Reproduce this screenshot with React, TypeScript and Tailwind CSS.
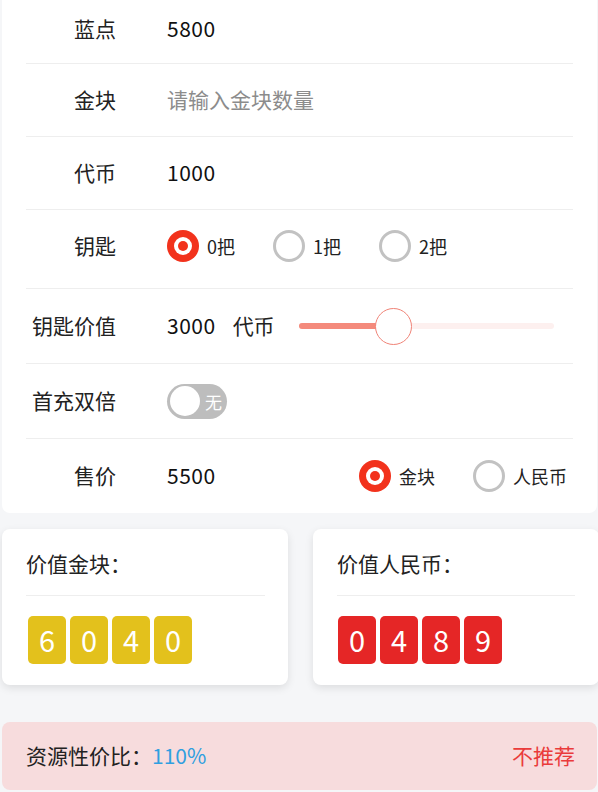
import React from "react";

const font = { fontFamily: '"Noto Sans CJK SC", "Noto Sans", sans-serif' };

function Radio({ checked, label }: { checked?: boolean; label: string }) {
  return (
    <div className="flex items-center gap-[8px]">
      {checked ? (
        <div className="w-[32px] h-[32px] rounded-full bg-[#f2321c] flex items-center justify-center">
          <div className="w-[18px] h-[18px] rounded-full bg-white flex items-center justify-center">
            <div className="w-[10px] h-[10px] rounded-full bg-[#f2321c]" />
          </div>
        </div>
      ) : (
        <div className="w-[32px] h-[32px] rounded-full border-[3px] border-[#c2c2c2] bg-white" />
      )}
      <span className="text-[18px] text-[#222]">{label}</span>
    </div>
  );
}

function Row({
  label,
  h,
  extra = "",
  last,
  children,
}: {
  label: string;
  h: string;
  extra?: string;
  last?: boolean;
  children: React.ReactNode;
}) {
  return (
    <div
      className={`flex items-center ${h} ${extra} ${last ? "" : "border-b border-[#eeeeee]"}`}
    >
      <div className="w-[90px] text-right text-[21px] text-[#222] shrink-0">{label}</div>
      <div className="ml-[51px] flex-1 flex items-center">{children}</div>
    </div>
  );
}

function Digits({ value, color }: { value: string; color: string }) {
  return (
    <div className="flex gap-[4px]">
      {value.split("").map((d, i) => (
        <div
          key={i}
          className={`w-[38px] h-[48px] rounded-[5px] ${color} flex items-center justify-center text-white text-[29px]`}
        >
          {d}
        </div>
      ))}
    </div>
  );
}

export default function App() {
  return (
    <div className="w-[598px] h-[792px] bg-[#f5f6f8] overflow-hidden pl-[2px] pr-[1px]" style={font}>
      <div className="bg-white rounded-b-[8px] px-[24px]">
        <Row label="蓝点" h="h-[64px]" extra="pb-[6px]">
          <span className="text-[21px] text-[#111] tracking-[0.5px]">5800</span>
        </Row>
        <Row label="金块" h="h-[73px]">
          <input
            className="w-full outline-none text-[21px] text-[#111] placeholder:text-[#8c8c8c] bg-transparent"
            placeholder="请输入金块数量"
          />
        </Row>
        <Row label="代币" h="h-[73px]">
          <span className="text-[21px] text-[#111] tracking-[0.5px]">1000</span>
        </Row>
        <Row label="钥匙" h="h-[79px]" extra="pb-[6px]">
          <div className="flex items-center gap-[38px]">
            <Radio checked label="0把" />
            <Radio label="1把" />
            <Radio label="2把" />
          </div>
        </Row>
        <Row label="钥匙价值" h="h-[75px]">
          <span className="text-[21px] text-[#111] tracking-[0.5px]">3000</span>
          <span className="text-[21px] text-[#222] ml-[17px]">代币</span>
          <div className="ml-[24px] w-[255px] h-[6px] rounded-full bg-[#fdf0ef] relative">
            <div className="absolute left-0 top-0 h-[6px] w-[95px] rounded-full bg-[#f48a7c]" />
            <div className="absolute left-[76px] top-[-15.5px] w-[37px] h-[37px] rounded-full bg-white border border-[#f08377]" />
          </div>
        </Row>
        <Row label="首充双倍" h="h-[75px]">
          <div className="w-[60px] h-[35px] rounded-full bg-[#bdbdbd] flex items-center pl-[3px] relative">
            <div className="w-[30px] h-[30px] rounded-full bg-white" />
            <span className="ml-[5px] text-[17px] text-white leading-none">无</span>
          </div>
        </Row>
        <Row label="售价" h="h-[74px]" last>
          <span className="text-[21px] text-[#111] tracking-[0.5px]">5500</span>
          <div className="ml-auto flex items-center gap-[38px] pr-[6px]">
            <Radio checked label="金块" />
            <Radio label="人民币" />
          </div>
        </Row>
      </div>

      <div className="flex gap-[25px] mt-[16px]">
        <div className="w-[286px] h-[156px] shrink-0 bg-white rounded-[8px] shadow-[0_3px_8px_rgba(0,0,0,0.1)] px-[24px] pt-[20px]">
          <div className="text-[21px] text-[#222] leading-[28px]">价值金块：</div>
          <div className="h-px bg-[#eeeeee] mt-[18px] mr-[-1px]" />
          <div className="mt-[20px] ml-[2px]">
            <Digits value="6040" color="bg-[#e3c11c]" />
          </div>
        </div>
        <div className="w-[286px] h-[156px] bg-white rounded-[8px] shadow-[0_3px_8px_rgba(0,0,0,0.1)] px-[24px] pt-[20px] shrink-0">
          <div className="text-[21px] text-[#222] leading-[28px]">价值人民币：</div>
          <div className="h-px bg-[#eeeeee] mt-[18px]" />
          <div className="mt-[20px] ml-[1px]">
            <Digits value="0489" color="bg-[#e52626]" />
          </div>
        </div>
      </div>

      <div className="mt-[37px] h-[68px] bg-[#f7dcdd] rounded-[8px] flex items-center pl-[24px] pr-[22px] text-[21px]">
        <span className="text-[#222]">资源性价比：</span>
        <span className="text-[#2f9fe0]">110%</span>
        <span className="ml-auto text-[#ea3b3b]">不推荐</span>
      </div>
    </div>
  );
}
